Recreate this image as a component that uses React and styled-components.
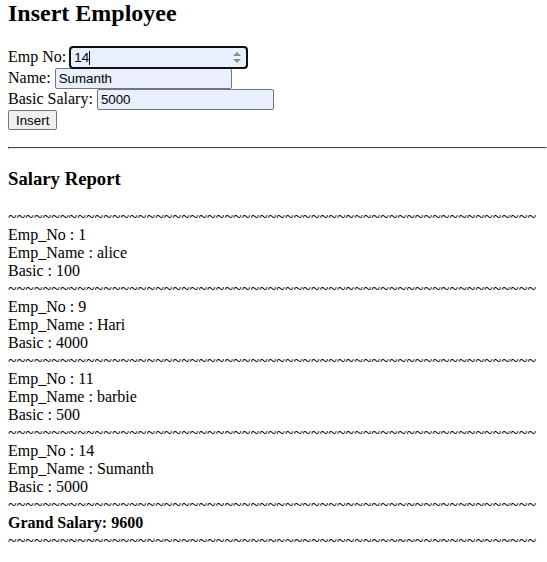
import React from 'react'
import styled, { createGlobalStyle } from 'styled-components'

const GlobalStyle = createGlobalStyle`
  html, body {
    background: #ffffff;
  }
  body {
    margin: 0 0 8px 8px;
    font-family: 'Liberation Serif', 'Times New Roman', serif;
    font-size: 16px;
    color: #000000;
  }
`

const Heading = styled.h2`
  font-size: 24px;
  font-weight: bold;
  margin: 0 0 19.92px;
`

const Form = styled.form`
  margin: 0 0 16px;
`

const Row = styled.div`
  height: 21px;
  display: flex;
  align-items: center;
  gap: 4px;
`

const FieldWrap = styled.span`
  position: relative;
  display: inline-block;
`

const Field = styled.input`
  box-sizing: border-box;
  height: 21px;
  font-family: Arial, 'Liberation Sans', sans-serif;
  font-size: 13.33px;
  background: #e8f0fe;
  border: 1px solid #767676;
  border-radius: 2px;
  padding: 1px 3px;
  width: 177px;
  color: #000000;
  margin: 0;

  &::-webkit-inner-spin-button,
  &::-webkit-outer-spin-button {
    -webkit-appearance: none;
    margin: 0;
  }

  ${({ $focused }) =>
    $focused &&
    `
    outline: 2px solid #101010;
    outline-offset: -1px;
    border-radius: 3px;
  `}
`

const Spinner = styled.svg`
  position: absolute;
  right: 6px;
  top: 5px;
`

const Caret = styled.span`
  position: absolute;
  left: 19px;
  top: 4px;
  width: 1px;
  height: 14px;
  background: #000000;
`

const Button = styled.button`
  box-sizing: border-box;
  height: 20px;
  font-family: Arial, 'Liberation Sans', sans-serif;
  font-size: 13.33px;
  background: #efefef;
  border: 1px solid #767676;
  border-radius: 2px;
  padding: 0 7px;
  color: #000000;
  margin: 0;
`

const Rule = styled.hr`
  margin: 0 0 8px;
  border: 1px inset #eeeeee;
  border-top-color: #9a9a9a;
  border-left-color: #9a9a9a;
`

const SubHeading = styled.h3`
  font-size: 18.72px;
  font-weight: bold;
  margin: 18.72px 0;
`

const Report = styled.div`
  line-height: normal;
  width: 539px;
`

const Tildes = styled.div`
  white-space: nowrap;
  overflow: hidden;
`

const Line = styled.div``

const Total = styled.b``

const employees = [
  { no: 1, name: 'alice', basic: 100 },
  { no: 9, name: 'Hari', basic: 4000 },
  { no: 11, name: 'barbie', basic: 500 },
  { no: 14, name: 'Sumanth', basic: 5000 },
]

const tilde = '~'.repeat(61)

export default function App() {
  const grand = employees.reduce((sum, e) => sum + e.basic, 0)
  return (
    <>
      <GlobalStyle />
      <Heading>Insert Employee</Heading>
      <Form onSubmit={(e) => e.preventDefault()}>
        <Row>
          Emp No:
          <FieldWrap>
            <Field type="number" defaultValue="14" $focused />
            <Caret />
            <Spinner width="8" height="11" viewBox="0 0 8 11">
              <path d="M4 0 L8 4 L0 4 Z" fill="#8a8a8a" />
              <path d="M0 7 L8 7 L4 11 Z" fill="#8a8a8a" />
            </Spinner>
          </FieldWrap>
        </Row>
        <Row>
          Name: <Field type="text" defaultValue="Sumanth" />
        </Row>
        <Row>
          Basic Salary: <Field type="text" defaultValue="5000" />
        </Row>
        <Row>
          <Button type="submit">Insert</Button>
        </Row>
      </Form>
      <Rule />
      <SubHeading>Salary Report</SubHeading>
      <Report>
        <Tildes>{tilde}</Tildes>
        {employees.map((e) => (
          <React.Fragment key={e.no}>
            <Line>Emp_No : {e.no}</Line>
            <Line>Emp_Name : {e.name}</Line>
            <Line>Basic : {e.basic}</Line>
            <Tildes>{tilde}</Tildes>
          </React.Fragment>
        ))}
        <Line>
          <Total>Grand Salary: {grand}</Total>
        </Line>
        <Tildes>{tilde}</Tildes>
      </Report>
    </>
  )
}
